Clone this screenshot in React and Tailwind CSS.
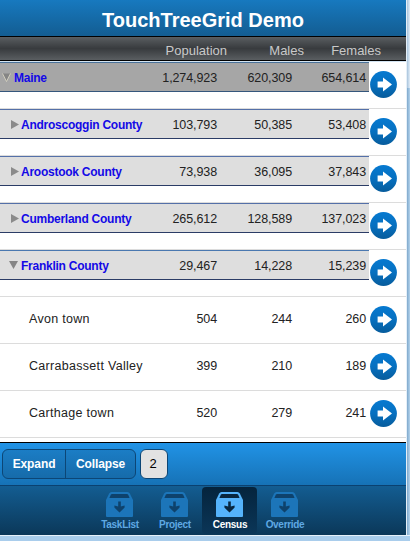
import React from "react";

const rows = [
  { name: "Maine", kind: "root", values: ["1,274,923", "620,309", "654,614"] },
  { name: "Androscoggin County", kind: "closed", values: ["103,793", "50,385", "53,408"] },
  { name: "Aroostook County", kind: "closed", values: ["73,938", "36,095", "37,843"] },
  { name: "Cumberland County", kind: "closed", values: ["265,612", "128,589", "137,023"] },
  { name: "Franklin County", kind: "open", values: ["29,467", "14,228", "15,239"] },
  { name: "Avon town", kind: "leaf", values: ["504", "244", "260"] },
  { name: "Carrabassett Valley", kind: "leaf", values: ["399", "210", "189"] },
  { name: "Carthage town", kind: "leaf", values: ["520", "279", "241"] },
];

const boxStyles = {
  root: "h-[30px] border-y border-t-[#4b7299] border-b-[#34567c] bg-[#a6a6a6] pl-[2px]",
  closed: "h-[30px] border-y border-t-[#5470a8] border-b-[#2b3c66] bg-[#dedede] pl-[11px]",
  open: "h-[30px] border-y border-t-[#4a78b0] border-b-[#2b3c66] bg-[#dedede] pl-[9px]",
  leaf: "h-[42px] pl-[29px]",
};

function Disclosure({ kind }) {
  if (kind === "leaf") return null;
  if (kind === "closed") {
    return (
      <svg className="mr-[2px] h-[9px] w-[8px] shrink-0" viewBox="0 0 8 9">
        <path d="M0 0L8 4.5L0 9Z" fill="#8b8b8b" />
      </svg>
    );
  }
  if (kind === "root") {
    return (
      <svg className="mr-[3px] h-[9px] w-[9px] shrink-0" viewBox="0 0 9 9">
        <path d="M0.5 0.5H8.5L4.5 8.5Z" fill="#858585" />
        <path d="M0.5 0.5L4.5 8.5L8.5 0.5" fill="none" stroke="#ddd9c6" strokeWidth="0.8" />
      </svg>
    );
  }
  return (
    <svg className="mr-[3px] h-[8px] w-[9px] shrink-0" viewBox="0 0 9 8">
      <path d="M0 0H9L4.5 8Z" fill="#858585" />
    </svg>
  );
}

function ArrowButton() {
  return (
    <svg className="mt-[9px] ml-[1px] h-[27px] w-[27px] shrink-0" viewBox="0 0 27 27">
      <defs>
        <linearGradient id="disc" x1="0" y1="0" x2="0" y2="1">
          <stop offset="0" stopColor="#0679d0" />
          <stop offset="0.5" stopColor="#0670c0" />
          <stop offset="1" stopColor="#075c9c" />
        </linearGradient>
      </defs>
      <circle cx="13.5" cy="13.5" r="13.4" fill="url(#disc)" />
      <path d="M7.6 10.6H13V6.6L22 13.5L13 20.4V16.4H7.6Z" fill="#fff" />
    </svg>
  );
}

function Row({ row }) {
  const leaf = row.kind === "leaf";
  return (
    <div className="flex h-[47px] items-start border-b border-[#dcdcdc]">
      <div
        className={
          "flex w-[369px] items-center text-[12.5px] tracking-[-0.1px] text-[#222] " +
          boxStyles[row.kind]
        }
      >
        <Disclosure kind={row.kind} />
        <span
          className={
            "flex-1 whitespace-nowrap " +
            (leaf
              ? "pt-[2px] tracking-[0.3px]"
              : "pt-[1px] text-[12px] font-bold tracking-[-0.25px] text-[#140ae6]")
          }
        >
          {row.name}
        </span>
        <span className="w-[70px] pt-[2px] text-right">{row.values[0]}</span>
        <span className="w-[75px] pt-[2px] text-right">{row.values[1]}</span>
        <span className="w-[74px] pt-[2px] text-right">{row.values[2]}</span>
        <span className="w-[3px]" />
      </div>
      <ArrowButton />
    </div>
  );
}

function Tab({ label, active }) {
  const glyph = active ? "#55b3fb" : "#1c75b9";
  const hole = active ? "#08263e" : "#0e426c";
  return (
    <div
      className={
        "flex h-[47px] w-[55px] flex-col items-center rounded-[4px] " +
        (active ? "bg-linear-to-b from-[#05243d] to-[#0b3658] text-white" : "text-[#5fa9e4]")
      }
    >
      <svg className="mt-[5px] h-[25px] w-[27px]" viewBox="0 0 27 25">
        <path d="M0 24V8L3.2 1.5Q4 0 5.5 0H21.5Q23 0 23.8 1.5L27 8V24Q27 25 26 25H1Q0 25 0 24Z" fill={glyph} />
        <path d="M6 2H21Q21.8 2 22.2 2.8L23.6 6H3.4L4.8 2.8Q5.2 2 6 2Z" fill={hole} />
        <path d="M12.2 9.5H14.8V14.6L18.6 13.6V15.6L13.5 20.6L8.4 15.6V13.6L12.2 14.6Z" fill={hole} />
      </svg>
      <span className="mt-[1px] pl-[1px] text-[10px] leading-[14px] font-bold tracking-[-0.3px]">{label}</span>
    </div>
  );
}

export default function App() {
  return (
    <div className="flex h-[541px] w-[410px] flex-col overflow-hidden bg-[#b5d5f0] font-['Liberation_Sans',Arial,sans-serif]">
      <div className="flex">
        <div className="flex h-[535px] w-[406px] flex-col bg-white">
          <header className="flex h-[37px] items-center justify-center border-b border-black bg-linear-to-b from-[#1779bf] to-[#135d92] pt-[3px] text-[20px] font-bold text-white">
            <span>TouchTreeGrid Demo</span>
          </header>
          <div className="flex h-[24px] items-center border-b border-black bg-linear-to-b from-[#5a5e61] via-[#383b3e] to-[#5a5e61] pt-[4px] text-[13px] text-[#c9c9c9]">
            <span className="w-[227px] text-right">Population</span>
            <span className="w-[77px] text-right">Males</span>
            <span className="w-[77px] text-right">Females</span>
          </div>
          <main className="h-[381px] border-t border-[#d3e4f2]">
            {rows.map((row) => (
              <Row key={row.name} row={row} />
            ))}
          </main>
          <div className="flex h-[44px] items-center border-t border-b border-t-black border-b-[#0b4170] bg-linear-to-b from-[#2193e6] to-[#1672b6] pl-[2px] text-[12px] font-bold text-white">
            <div className="flex h-[30px] w-[134px] overflow-hidden rounded-[6px] border border-[#0c4676] bg-linear-to-b from-[#1b7dc5] to-[#166baa]">
              <button className="w-[63px] border-r border-[#0c4676] tracking-[-0.1px]">Expand</button>
              <button className="flex-1 tracking-[-0.1px]">Collapse</button>
            </div>
            <div className="ml-[4px] flex h-[30px] w-[28px] items-center justify-center rounded-[6px] border border-[#0c4676] bg-[#e2e2e2] pr-[2px] text-[13px] font-normal text-black">
              2
            </div>
          </div>
          <nav className="flex h-[49px] items-start bg-linear-to-b from-[#135d92] to-[#0b3859] pt-[1px] pl-[92px]">
            <Tab label="TaskList" />
            <Tab label="Project" />
            <Tab label="Census" active />
            <Tab label="Override" />
          </nav>
        </div>
        <div className="flex h-[535px] w-[4px] flex-col border-l border-[#e5eff8]">
          <div className="h-[88px] bg-linear-to-r from-[#a9c4dc] to-[#e3eef8]" />
          <div className="flex-1 bg-linear-to-r from-[#7fa9cc] to-[#b4d3ec]" />
        </div>
      </div>
      <div className="h-[6px] border-t border-[#e6f1fa] bg-[#a9cdec]" />
    </div>
  );
}
